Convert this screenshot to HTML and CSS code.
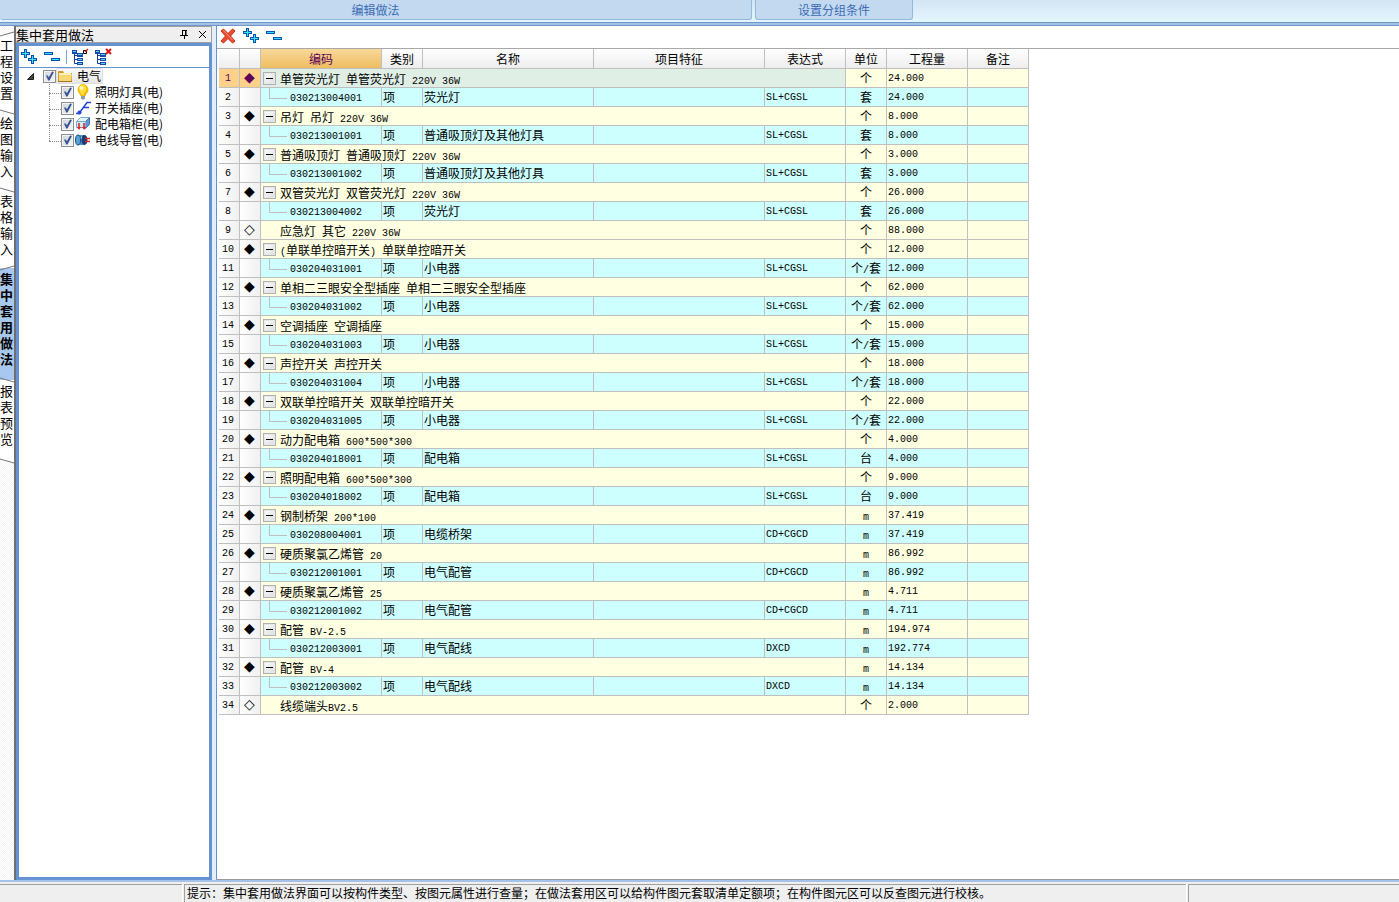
FILE: index.html
```html
<!DOCTYPE html>
<html lang="zh-CN">
<head>
<meta charset="utf-8">
<title>集中套用做法</title>
<link rel="stylesheet" href="styles.css">
</head>
<body>
<svg class="defs" aria-hidden="true">
  <symbol id="i-expand" viewBox="0 0 16 16">
    <path d="M3 0h3v3h3v3H6v3H3V6H0V3h3z" fill="#0a55b4"/>
    <path d="M4 1h1v3h3v1H5v3H4V5H1V4h3z" fill="#35e0f8"/>
    <path d="M10 6h3v3h3v3h-3v3h-3v-3H7V9h3z" fill="#0a55b4"/>
    <path d="M11 7h1v3h3v1h-3v3h-1v-3H8v-1h3z" fill="#35e0f8"/>
  </symbol>
  <symbol id="i-collapse" viewBox="0 0 16 16">
    <path d="M0 3h9v3H0zM7 9h9v3H7z" fill="#0a55b4"/>
    <path d="M1 4h7v1H1zM8 10h7v1H8z" fill="#35e0f8"/>
  </symbol>
  <symbol id="i-nodes" viewBox="0 0 16 16">
    <path d="M2.500 5v9.500H6M3 6.500h3M3 10.500h3" fill="none" stroke="#123c96"/>
    <path d="M0 1h5v4H0zM5 4h6v4H5zM5 9h6v3H5zM5 13h6v3H5z" fill="#1749a8"/>
    <path d="M1 2h3v1H1zM6 5h4v1H6zM6 10h4v1H6zM6 14h4v1H6z" fill="#5fd0f4"/>
  </symbol>
</svg>

<header class="ribbon">
  <button class="ribbon-group ribbon-main" type="button">编辑做法</button>
  <button class="ribbon-group ribbon-filter" type="button">设置分组条件</button>
</header>

<main class="workspace">
  <nav class="side-tabs" aria-label="模块">
    <button class="side-tab" type="button"><svg class="slant" viewBox="0 0 14 6" preserveAspectRatio="none"><path d="M0 5L14 1"/></svg>工程设置</button>
    <button class="side-tab" type="button"><svg class="slant" viewBox="0 0 14 6" preserveAspectRatio="none"><path d="M0 1L14 5"/></svg>绘图输入</button>
    <button class="side-tab" type="button"><svg class="slant" viewBox="0 0 14 6" preserveAspectRatio="none"><path d="M0 1L14 5"/></svg>表格输入</button>
    <button class="side-tab active" type="button"><svg class="slant" viewBox="0 0 14 6" preserveAspectRatio="none"><path d="M0 5L14 1"/></svg>集中套用做法</button>
    <button class="side-tab" type="button"><svg class="slant" viewBox="0 0 14 6" preserveAspectRatio="none"><path d="M0 1L14 5"/></svg>报表预览</button>
    <svg class="slant-end" viewBox="0 0 14 6"><path class="fill" d="M0 0h14v5L0 1z"/><path d="M0 1L14 5"/></svg>
  </nav>

  <aside class="dock">
    <div class="dock-title">
      <h2>集中套用做法</h2>
      <button type="button" aria-label="固定"><svg viewBox="0 0 9 9"><path d="M2.500 0v5M6 0v5M2 .5h5M0 5.500h8M4.500 6v3" stroke="#000" fill="none"/><path d="M5 1h1v4H5z"/></svg></button>
      <button type="button" aria-label="关闭"><svg viewBox="0 0 9 9"><path d="M1 1l7 7M8 1L1 8" stroke="#000" fill="none"/></svg></button>
    </div>
    <div class="dock-body">
      <div class="toolbar dock-tools">
        <button type="button" aria-label="展开"><svg viewBox="0 0 16 16"><use href="#i-expand"/></svg></button>
        <button type="button" aria-label="折叠"><svg viewBox="0 0 16 16"><use href="#i-collapse"/></svg></button>
        <span class="divider"></span>
        <button type="button" aria-label="全选"><svg viewBox="0 0 16 16"><use href="#i-nodes"/><path d="M11.500 1.500h3v3h-3z" fill="#fff" stroke="#000"/><path d="M13 3l3-3" stroke="#e02010" stroke-width="1.500"/></svg></button>
        <button type="button" aria-label="取消全选"><svg viewBox="0 0 16 16"><use href="#i-nodes"/><path d="M11 0l5 5M16 0l-5 5" stroke="#d81818" stroke-width="2"/></svg></button>
      </div>
      <ul class="tree">
        <li>
          <div class="node root">
            <svg class="arrow" viewBox="0 0 7 7"><path d="M6.500 .5v6h-6z" fill="#444" stroke="#222"/></svg>
            <input type="checkbox" id="n0" checked>
            <label for="n0" class="picked"><svg viewBox="0 0 16 16"><path d="M1 3h5l1 2h8v9H1z" fill="#d29a2c"/><path d="M2 5h5l1 1h7l-1 7H2z" fill="#f7d878"/><path d="M2 5h12v2H2z" fill="#fff0b4"/><path d="M1 13.500h14" stroke="#a87418"/></svg>电气</label>
          </div>
          <ul>
            <li><div class="node"><input type="checkbox" id="n1" checked><label for="n1"><svg viewBox="0 0 16 16"><path d="M8 0a6 6 0 0 0-5.500 6c0 2.500 2.500 3.500 3 6h5c.5-2.500 3-3.500 3-6A6 6 0 0 0 8 0z" fill="#f6b800"/><path d="M7.500 1A4.500 4.500 0 0 0 4 5.500C4 8 6 8.500 6.500 11h2C9 8 11.500 8 11.500 5S10 1 7.500 1z" fill="#ffdf38"/><circle cx="6.500" cy="4" r="2" fill="#fff9bc"/><path d="M6 12h4v2.500L8 16l-2-1.500z" fill="#8d9ba8"/></svg>照明灯具(电)</label></div></li>
            <li><div class="node"><input type="checkbox" id="n2" checked><label for="n2"><svg viewBox="0 0 16 16"><path d="M1 13.500h3L12 2.500h4M8.500 7.500H14" fill="none" stroke="#2344d8" stroke-width="1.500"/><circle cx="4.500" cy="12.500" r="2" fill="#2344d8"/></svg>开关插座(电)</label></div></li>
            <li><div class="node"><input type="checkbox" id="n3" checked><label for="n3"><svg viewBox="0 0 16 16"><path d="M1.500 5.500l4-4h9l-4 4z" fill="#e4f6fd" stroke="#7aa9d0"/><path d="M10.500 5.500l4-4v7l-4 4z" fill="#5c9ad6" stroke="#4478b0"/><path d="M1.500 5.500h9v6h-9z" fill="#cdeaf8" stroke="#7aa9d0"/><path d="M4 7v5M9 7v5" stroke="#e02020" stroke-width="1.500"/><path d="M2 11h4l-2 3zM7 11h4l-2 3z" fill="#e02020"/></svg>配电箱柜(电)</label></div></li>
            <li><div class="node"><input type="checkbox" id="n4" checked><label for="n4"><svg viewBox="0 0 16 16"><path d="M3 3h7v10H3z" fill="#4a94cc"/><path d="M3 5h7v2H3z" fill="#b6e4f6"/><ellipse cx="3" cy="8" rx="2.500" ry="5" fill="#5aa2d4" stroke="#175080"/><ellipse cx="9.500" cy="8" rx="3" ry="5" fill="#173e70"/><path d="M10 6.500h5M10 9.500h5" stroke="#e42020" stroke-width="1.500"/></svg>电线导管(电)</label></div></li>
          </ul>
        </li>
      </ul>
    </div>
  </aside>

  <section class="sheet">
    <div class="toolbar sheet-tools">
      <button type="button" aria-label="删除"><svg viewBox="0 0 16 16"><path d="M3.500 1L8 5.500 12.500 1 15 3 10.500 8 15 13l-2.500 2L8 10.500 3.500 15 1 13l4.500-5L1 3z" fill="#ee4a30" stroke="#c63018"/><path d="M3.500 2.500l9 9.500" stroke="#ff9a78"/></svg></button>
      <button type="button" aria-label="展开"><svg viewBox="0 0 16 16"><use href="#i-expand"/></svg></button>
      <button type="button" aria-label="折叠"><svg viewBox="0 0 16 16"><use href="#i-collapse"/></svg></button>
    </div>
    <table class="grid">
      <colgroup><col class="w-no"><col class="w-no"><col class="w-code"><col class="w-s"><col class="w-l"><col class="w-l"><col class="w-m"><col class="w-s"><col class="w-m"><col class="w-note"></colgroup>
      <thead><tr><th></th><th></th><th class="current">编码</th><th>类别</th><th>名称</th><th>项目特征</th><th>表达式</th><th>单位</th><th>工程量</th><th>备注</th></tr></thead>
      <tbody>
        <tr class="group selected"><th>1</th><th class="mark">◆</th><td colspan="5"><div><button type="button" aria-label="折叠"></button><span>单管荧光灯<code> </code>单管荧光灯<code> 220V 36W</code></span></div></td><td>个</td><td>24.000</td><td></td></tr>
        <tr class="item"><th>2</th><th></th><td><div>030213004001</div></td><td>项</td><td>荧光灯</td><td></td><td>SL+CGSL</td><td>套</td><td>24.000</td><td></td></tr>
        <tr class="group"><th>3</th><th class="mark">◆</th><td colspan="5"><div><button type="button" aria-label="折叠"></button><span>吊灯<code> </code>吊灯<code> 220V 36W</code></span></div></td><td>个</td><td>8.000</td><td></td></tr>
        <tr class="item"><th>4</th><th></th><td><div>030213001001</div></td><td>项</td><td>普通吸顶灯及其他灯具</td><td></td><td>SL+CGSL</td><td>套</td><td>8.000</td><td></td></tr>
        <tr class="group"><th>5</th><th class="mark">◆</th><td colspan="5"><div><button type="button" aria-label="折叠"></button><span>普通吸顶灯<code> </code>普通吸顶灯<code> 220V 36W</code></span></div></td><td>个</td><td>3.000</td><td></td></tr>
        <tr class="item"><th>6</th><th></th><td><div>030213001002</div></td><td>项</td><td>普通吸顶灯及其他灯具</td><td></td><td>SL+CGSL</td><td>套</td><td>3.000</td><td></td></tr>
        <tr class="group"><th>7</th><th class="mark">◆</th><td colspan="5"><div><button type="button" aria-label="折叠"></button><span>双管荧光灯<code> </code>双管荧光灯<code> 220V 36W</code></span></div></td><td>个</td><td>26.000</td><td></td></tr>
        <tr class="item"><th>8</th><th></th><td><div>030213004002</div></td><td>项</td><td>荧光灯</td><td></td><td>SL+CGSL</td><td>套</td><td>26.000</td><td></td></tr>
        <tr class="group leaf"><th>9</th><th class="mark">◇</th><td colspan="5"><div><span>应急灯<code> </code>其它<code> 220V 36W</code></span></div></td><td>个</td><td>88.000</td><td></td></tr>
        <tr class="group"><th>10</th><th class="mark">◆</th><td colspan="5"><div><button type="button" aria-label="折叠"></button><span><code>(</code>单联单控暗开关<code>) </code>单联单控暗开关</span></div></td><td>个</td><td>12.000</td><td></td></tr>
        <tr class="item"><th>11</th><th></th><td><div>030204031001</div></td><td>项</td><td>小电器</td><td></td><td>SL+CGSL</td><td>个<code>/</code>套</td><td>12.000</td><td></td></tr>
        <tr class="group"><th>12</th><th class="mark">◆</th><td colspan="5"><div><button type="button" aria-label="折叠"></button><span>单相二三眼安全型插座<code> </code>单相二三眼安全型插座</span></div></td><td>个</td><td>62.000</td><td></td></tr>
        <tr class="item"><th>13</th><th></th><td><div>030204031002</div></td><td>项</td><td>小电器</td><td></td><td>SL+CGSL</td><td>个<code>/</code>套</td><td>62.000</td><td></td></tr>
        <tr class="group"><th>14</th><th class="mark">◆</th><td colspan="5"><div><button type="button" aria-label="折叠"></button><span>空调插座<code> </code>空调插座</span></div></td><td>个</td><td>15.000</td><td></td></tr>
        <tr class="item"><th>15</th><th></th><td><div>030204031003</div></td><td>项</td><td>小电器</td><td></td><td>SL+CGSL</td><td>个<code>/</code>套</td><td>15.000</td><td></td></tr>
        <tr class="group"><th>16</th><th class="mark">◆</th><td colspan="5"><div><button type="button" aria-label="折叠"></button><span>声控开关<code> </code>声控开关</span></div></td><td>个</td><td>18.000</td><td></td></tr>
        <tr class="item"><th>17</th><th></th><td><div>030204031004</div></td><td>项</td><td>小电器</td><td></td><td>SL+CGSL</td><td>个<code>/</code>套</td><td>18.000</td><td></td></tr>
        <tr class="group"><th>18</th><th class="mark">◆</th><td colspan="5"><div><button type="button" aria-label="折叠"></button><span>双联单控暗开关<code> </code>双联单控暗开关</span></div></td><td>个</td><td>22.000</td><td></td></tr>
        <tr class="item"><th>19</th><th></th><td><div>030204031005</div></td><td>项</td><td>小电器</td><td></td><td>SL+CGSL</td><td>个<code>/</code>套</td><td>22.000</td><td></td></tr>
        <tr class="group"><th>20</th><th class="mark">◆</th><td colspan="5"><div><button type="button" aria-label="折叠"></button><span>动力配电箱<code> 600*500*300</code></span></div></td><td>个</td><td>4.000</td><td></td></tr>
        <tr class="item"><th>21</th><th></th><td><div>030204018001</div></td><td>项</td><td>配电箱</td><td></td><td>SL+CGSL</td><td>台</td><td>4.000</td><td></td></tr>
        <tr class="group"><th>22</th><th class="mark">◆</th><td colspan="5"><div><button type="button" aria-label="折叠"></button><span>照明配电箱<code> 600*500*300</code></span></div></td><td>个</td><td>9.000</td><td></td></tr>
        <tr class="item"><th>23</th><th></th><td><div>030204018002</div></td><td>项</td><td>配电箱</td><td></td><td>SL+CGSL</td><td>台</td><td>9.000</td><td></td></tr>
        <tr class="group"><th>24</th><th class="mark">◆</th><td colspan="5"><div><button type="button" aria-label="折叠"></button><span>钢制桥架<code> 200*100</code></span></div></td><td><code>m</code></td><td>37.419</td><td></td></tr>
        <tr class="item"><th>25</th><th></th><td><div>030208004001</div></td><td>项</td><td>电缆桥架</td><td></td><td>CD+CGCD</td><td><code>m</code></td><td>37.419</td><td></td></tr>
        <tr class="group"><th>26</th><th class="mark">◆</th><td colspan="5"><div><button type="button" aria-label="折叠"></button><span>硬质聚氯乙烯管<code> 20</code></span></div></td><td><code>m</code></td><td>86.992</td><td></td></tr>
        <tr class="item"><th>27</th><th></th><td><div>030212001001</div></td><td>项</td><td>电气配管</td><td></td><td>CD+CGCD</td><td><code>m</code></td><td>86.992</td><td></td></tr>
        <tr class="group"><th>28</th><th class="mark">◆</th><td colspan="5"><div><button type="button" aria-label="折叠"></button><span>硬质聚氯乙烯管<code> 25</code></span></div></td><td><code>m</code></td><td>4.711</td><td></td></tr>
        <tr class="item"><th>29</th><th></th><td><div>030212001002</div></td><td>项</td><td>电气配管</td><td></td><td>CD+CGCD</td><td><code>m</code></td><td>4.711</td><td></td></tr>
        <tr class="group"><th>30</th><th class="mark">◆</th><td colspan="5"><div><button type="button" aria-label="折叠"></button><span>配管<code> BV-2.5</code></span></div></td><td><code>m</code></td><td>194.974</td><td></td></tr>
        <tr class="item"><th>31</th><th></th><td><div>030212003001</div></td><td>项</td><td>电气配线</td><td></td><td>DXCD</td><td><code>m</code></td><td>192.774</td><td></td></tr>
        <tr class="group"><th>32</th><th class="mark">◆</th><td colspan="5"><div><button type="button" aria-label="折叠"></button><span>配管<code> BV-4</code></span></div></td><td><code>m</code></td><td>14.134</td><td></td></tr>
        <tr class="item"><th>33</th><th></th><td><div>030212003002</div></td><td>项</td><td>电气配线</td><td></td><td>DXCD</td><td><code>m</code></td><td>14.134</td><td></td></tr>
        <tr class="group leaf"><th>34</th><th class="mark">◇</th><td colspan="5"><div><span>线缆端头<code>BV2.5</code></span></div></td><td>个</td><td>2.000</td><td></td></tr>
      </tbody>
    </table>
  </section>
</main>

<footer class="status">
  <span></span>
  <span class="hint">提示：集中套用做法界面可以按构件类型、按图元属性进行查量；在做法套用区可以给构件图元套取清单定额项；在构件图元区可以反查图元进行校核。</span>
  <span></span>
</footer>
</body>
</html>
```
FILE: styles.css
```css
:root {
  --cjk: "Noto Sans CJK SC", sans-serif;
  --mono: "Liberation Mono", "Noto Sans CJK SC", monospace;
  --line: #bfbfbf;
  --frame: #6592d0;
}

* { box-sizing: border-box; }

body {
  margin: 0;
  height: 100vh;
  display: flex;
  flex-direction: column;
  overflow: hidden;
  background: #fff;
  color: #000;
  font: 12px/16px var(--cjk);
}

button {
  padding: 0;
  border: 0;
  background: none;
  color: inherit;
  font: inherit;
}

svg { display: block; overflow: visible; }
.defs { position: absolute; width: 0; height: 0; }

/* Ribbon */
.ribbon {
  flex: none;
  display: flex;
  gap: 3px;
  height: 26px;
  padding-bottom: 6px;
  background: linear-gradient(#d3e5f5, #e3f6fe 21px, #dff6ff 22px, #7099c8 22px, #7099c8 23px, #a4c0e2 23px, #a4c0e2 25px, #6f97cd 25px);
}
.ribbon-group {
  border: 1px solid #94b8dc;
  border-top: 0;
  border-radius: 0 0 3px 3px;
  background: #c2d9f0;
  color: #3c6cb4;
}
.ribbon-main { width: 752px; border-left: 0; }
.ribbon-filter { width: 158px; }

/* Workspace */
.workspace {
  flex: 1;
  min-height: 0;
  display: flex;
  background: #e4edfa;
}

.side-tabs {
  flex: none;
  display: flex;
  flex-direction: column;
  width: 16px;
  padding-top: 8px;
  border-right: 2px solid #6f6f6f;
  background: repeating-conic-gradient(#f4f4f4 0 25%, #fff 0 50%) 0 0 / 2px 2px;
}
.side-tab {
  position: relative;
  display: flex;
  align-items: flex-start;
  height: 78px;
  padding-top: 3px;
  background: #fff;
  font-size: 13px;
  line-height: 16px;
  word-break: break-all;
  text-align: left;
}
.side-tab.active {
  height: 112px;
  background: #a8c9ef;
  font-weight: bold;
}
.slant {
  position: absolute;
  top: -3px;
  left: 0;
  width: 14px;
  height: 6px;
}
.slant-end { width: 14px; height: 6px; }
.slant path, .slant-end path { fill: none; stroke: #777; }
.slant-end .fill { fill: #fff; stroke: none; }

/* Docked component tree */
.dock {
  flex: none;
  display: flex;
  flex-direction: column;
  width: 196px;
}
.dock-title {
  display: flex;
  align-items: center;
  gap: 9px;
  height: 17px;
  padding-right: 4px;
  border: 1px solid #a0a0a0;
  border-left: 0;
  background: #efefef;
}
.dock-title h2 {
  flex: 1;
  margin: 0;
  font-size: 13px;
  font-weight: normal;
  line-height: 14px;
}
.dock-title svg { width: 9px; height: 9px; }
.dock-body {
  flex: 1;
  border: 3px solid var(--frame);
  background: #fff;
}

.toolbar { display: flex; align-items: center; }
.toolbar svg { width: 16px; height: 16px; }
.dock-tools {
  gap: 7px;
  height: 22px;
  padding-left: 2px;
  border-bottom: 1px solid var(--frame);
}
.divider { width: 1px; height: 14px; margin: 0 -2px 0 -1px; background: #7ba3d8; }

.tree, .tree ul { margin: 0; padding: 0; list-style: none; }
.node { display: flex; align-items: center; height: 16px; }
.root { padding-left: 8px; }
.arrow { width: 7px; height: 7px; margin-right: 9px; }
.tree ul { margin-left: 30px; }
.tree ul .node::before {
  content: "";
  align-self: flex-start;
  width: 12px;
  height: 9px;
  border-bottom: 1px dotted #888;
}
.tree ul li { background: repeating-linear-gradient(#888 0 1px, transparent 1px 2px) 0 0 / 1px 100% no-repeat; }
.tree ul li:last-child { background-size: 1px 9px; }
.tree input {
  appearance: none;
  flex: none;
  width: 13px;
  height: 13px;
  margin: 0;
  border: 1px solid #8e8f8f;
  background: linear-gradient(135deg, #cfd5dc, #f6f6f6);
  box-shadow: inset 0 0 0 1px #f4f4f4;
}
.tree input:checked::before {
  content: "";
  display: block;
  width: 11px;
  height: 11px;
  background: #3a5590;
  clip-path: polygon(18% 45%, 34% 45%, 44% 62%, 74% 10%, 90% 14%, 50% 90%, 38% 90%);
}
.tree label { display: flex; align-items: center; gap: 4px; padding: 0 2px 0 1px; line-height: 14px; }
.tree label svg { width: 16px; height: 16px; }
.tree .picked {
  border-radius: 2px;
  background: linear-gradient(#fafafa, #e5e5e5);
  box-shadow: inset 0 0 0 1px #e0e0e0;
}

/* Bill of quantities */
.sheet {
  flex: 1;
  min-width: 0;
  margin-left: 4px;
  border-left: 1px solid var(--frame);
  border-bottom: 1px solid #9a9a9a;
  background: #fff;
}
.sheet-tools {
  gap: 7px;
  height: 23px;
  padding: 0 0 2px 3px;
  border-bottom: 1px solid #a8a8a8;
}

.grid {
  width: 810px;
  margin-left: 2px;
  table-layout: fixed;
  border-collapse: separate;
  border-spacing: 0;
}
.w-no { width: 21px; }
.w-code { width: 121px; }
.w-s { width: 41px; }
.w-m { width: 81px; }
.w-l { width: 171px; }
.w-note { width: 61px; }

.grid th, .grid td {
  height: 19px;
  padding: 0 1px;
  border: solid var(--line);
  border-width: 0 1px 1px 0;
  overflow: hidden;
  font-weight: normal;
  line-height: 18px;
  text-align: left;
  white-space: nowrap;
}
.grid thead th {
  height: 20px;
  line-height: 19px;
  background: linear-gradient(#fff, #ededed);
  text-align: center;
}
.grid thead .current {
  background: linear-gradient(#f8d898, #efbd62);
  color: #5c0058;
}
.grid tbody th {
  padding: 2px 2px 0 0;
  background: linear-gradient(90deg, #fff, #f0f0f0);
  font: 10px/16px var(--mono);
  text-align: center;
}
.grid tbody .mark { padding: 0 1px 2px 0; font: 14px/14px "DejaVu Sans", sans-serif; }
.grid td:nth-last-child(3) { text-align: center; padding: 0; }
.grid td:nth-last-child(2) { padding-top: 2px; font: 10px/16px var(--mono); }
.item td { background: #ceffff; }
.item td:nth-child(7) { padding-top: 2px; font: 10px/16px var(--mono); }
.item td:nth-child(3) { padding: 0; }
.item div {
  display: flex;
  height: 18px;
  font: 10px/22px var(--mono);
}
.item div::before {
  content: "";
  width: 17px;
  height: 10px;
  margin: 0 3px 0 8px;
  border: solid var(--line);
  border-width: 0 0 1px 1px;
}
.group td { background: #ffffe1; }
.group td:nth-child(3) { padding: 0; }
.group div {
  display: flex;
  align-items: center;
  height: 18px;
  padding-left: 2px;
}
.group.leaf div { padding-left: 19px; }
.group span { padding-top: 2px; line-height: 16px; }
.group button {
  width: 13px;
  height: 13px;
  margin-right: 4px;
  border: 1px solid #b0b0b0;
  background: linear-gradient(#000, #000) center / 7px 1px no-repeat, linear-gradient(135deg, #fff, #d8dce0);
  box-shadow: inset 0 0 0 1px #e8e8e8;
}
.grid code { font: 10px/10px var(--mono); white-space: pre; }
.grid .selected th { background: #ffd08a; color: #5c0058; }
.grid .selected td:nth-child(3) { background: #e0efe6; }

/* Status bar */
.status {
  flex: none;
  display: grid;
  grid-template-columns: 182px 1fr 211px;
  gap: 2px;
  height: 22px;
  padding-top: 2px;
  border-top: 2px solid #a5c3ea;
  background: #efefef;
}
.status span {
  overflow: hidden;
  padding-left: 2px;
  border: solid #a0a0a0;
  border-width: 1px 0 0 1px;
  box-shadow: 1px 0 #fff;
  line-height: 16px;
  white-space: nowrap;
}
.status span:first-child { border-left: 0; }
```
